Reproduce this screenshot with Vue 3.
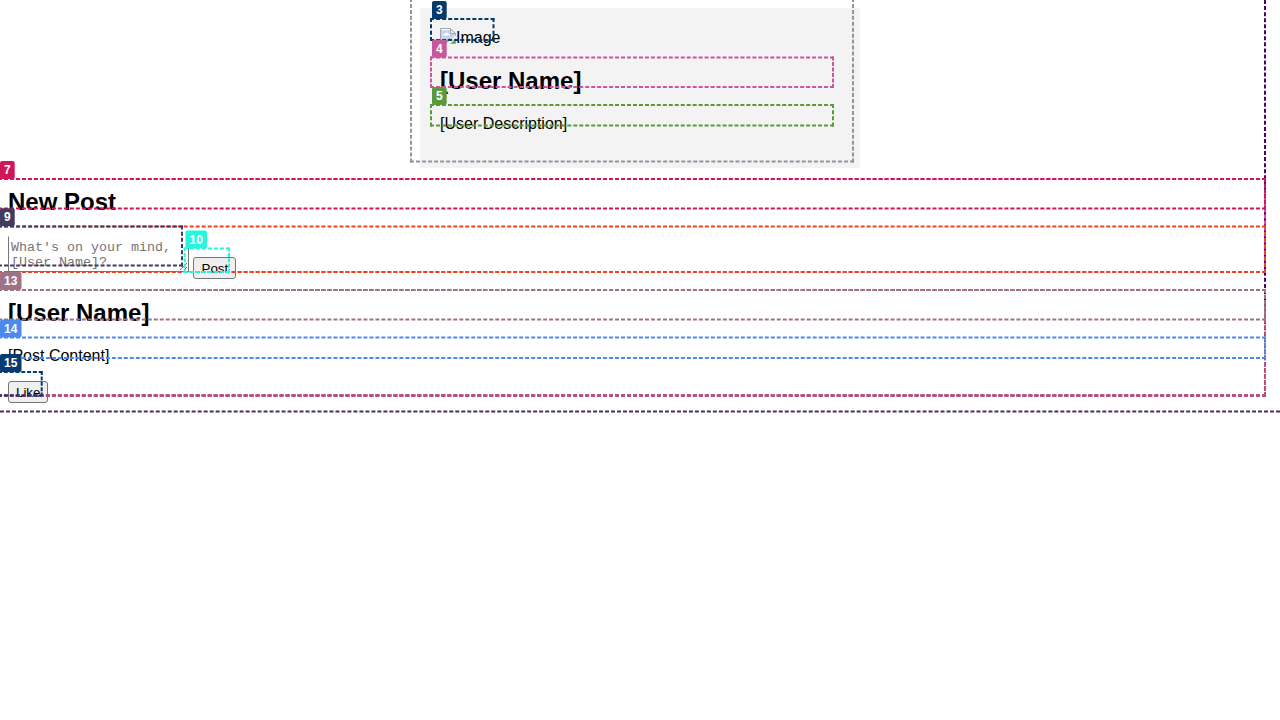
<script setup>
const boxes = [
  { id: 'body', c: '#4a2d68', x: -12, y: -20, r: 1292, b: 412.5 },
  { id: 'main', c: '#4b0078', x: -2, y: -12, r: 1266, b: 396.6 },
  { id: '2', c: '#8b98a3', x: 410, y: -2, r: 854, b: 162.5 },
  { id: '3', c: '#063a6b', x: 430, y: 18, r: 494.5, b: 41, lx: 432, ly: 1 },
  { id: '4', c: '#c9579c', x: 430, y: 56.5, r: 834, b: 88, lx: 432, ly: 39.7 },
  { id: '5', c: '#5a9a3c', x: 430, y: 104, r: 834, b: 126.5, lx: 432, ly: 87 },
  { id: '6', c: '#e646bd', x: -2, y: 178, r: 1266, b: 273 },
  { id: '7', c: '#d1155a', x: -2, y: 178, r: 1266, b: 209.5, lx: 0, ly: 161 },
  { id: '8', c: '#f04322', x: -2, y: 225.5, r: 1266, b: 273 },
  { id: '9', c: '#433b5f', x: -2, y: 225.5, r: 183, b: 266.5, lx: 0, ly: 208.3 },
  { id: '10', c: '#27f5dc', x: 183.7, y: 247.5, r: 230, b: 273, lx: 185.5, ly: 230.5 },
  { id: '11', c: '#a83f91', x: -2, y: 289, r: 1266, b: 396.6 },
  { id: '12', c: '#c94a68', x: -2, y: 289, r: 1266, b: 396.6 },
  { id: '13', c: '#9d7388', x: -2, y: 289, r: 1266, b: 320.5, lx: 0, ly: 272 },
  { id: '14', c: '#4c89ef', x: -2, y: 336.5, r: 1266, b: 359, lx: 0, ly: 319.6 },
  { id: '15', c: '#063a73', x: -2, y: 371, r: 42.7, b: 396.6, lx: 0, ly: 354 }
]

// Spreads 4px dashes so that each side starts and ends on a full dash.
const dash = (len) => {
  const gaps = Math.max(1, Math.round((len - 4) / 6))
  return `4 ${(len - 4 * (gaps + 1)) / gaps}`
}
const sides = (o) => [
  { x1: o.x, y1: o.y + 1, x2: o.r, y2: o.y + 1, d: dash(o.r - o.x) },
  { x1: o.x, y1: o.b - 1, x2: o.r, y2: o.b - 1, d: dash(o.r - o.x) },
  { x1: o.x + 1, y1: o.y, x2: o.x + 1, y2: o.b, d: dash(o.b - o.y) },
  { x1: o.r - 1, y1: o.y, x2: o.r - 1, y2: o.b, d: dash(o.b - o.y) }
]
</script>

<template>
  <div class="page">
    <section class="profile">
      <div class="avatar">
        <svg class="broken" width="16" height="16" viewBox="0 0 16 16">
          <path d="M.5.5h10l5 5v10H.5z" fill="#c3d5f7" stroke="#a5a5a5" />
          <path d="M1.500 1.500h9v4h4" fill="none" stroke="#fff" />
          <path d="M3 7.500q0-2 2-2 1-2 3 0 2 0 2 2z" fill="#fff" />
          <path d="M5.500 14.500q1-4 5-4l-4 4z" fill="#4fae35" />
          <path d="M10.5.5v5h5z" fill="#eee" stroke="#a5a5a5" />
          <path d="M16 7 6 16h4l6-6z" fill="#f3f3f3" />
          <path d="M11 15.5h4.500V11z" fill="#4fae35" stroke="#a5a5a5" stroke-width=".6" />
        </svg><span>Image</span>
      </div>
      <h2>[User Name]</h2>
      <p>[User Description]</p>
    </section>
    <section class="compose">
      <h2>New Post</h2>
      <form @submit.prevent>
        <textarea placeholder="What's on your mind, [User Name]?"></textarea>
        <button type="button">Post</button>
      </form>
    </section>
    <section>
      <h2>[User Name]</h2>
      <p>[Post Content]</p>
      <button type="button" class="like">Like</button>
    </section>
    <svg class="marks" width="1280" height="720">
      <g v-for="o in boxes" :key="o.id">
        <line v-for="(s, i) in sides(o)" :key="i" :x1="s.x1" :y1="s.y1" :x2="s.x2" :y2="s.y2"
          :stroke="o.c" stroke-width="2" :stroke-dasharray="s.d" />
        <template v-if="o.ly !== undefined">
          <rect :x="o.lx" :y="o.ly" :width="o.id.length > 1 ? 21.5 : 14.7" height="18" rx="2" :fill="o.c" />
          <text :x="o.lx + 4" :y="o.ly + 13">{{ o.id }}</text>
        </template>
      </g>
    </svg>
  </div>
</template>

<style>
body { margin: 0; overflow: hidden; background: #fff; }
</style>
<style scoped>
.page {
  position: relative;
  height: 720px;
  padding: 8px;
  box-sizing: border-box;
  overflow: hidden;
  font: 16px "Liberation Sans", Arial, sans-serif;
  color: #000;
}
.profile {
  width: 400px;
  height: 120px;
  margin: 0 auto;
  padding: 20px;
  background: #f3f3f3;
}
.avatar { display: flex; height: 19px; line-height: 20px; }
.broken { flex: none; }
h2 { margin: 20px 0; font-size: 24px; line-height: 27px; font-weight: 700; }
p { margin: 0 0 16px; padding-top: 1px; line-height: 18px; }
.compose h2 { margin-bottom: 21px; }
form { display: flex; align-items: flex-start; height: 43px; }
textarea {
  box-sizing: border-box;
  width: 181px;
  height: 36px;
  margin: 0;
  padding: 3px 2px 1px;
  border: 1px solid #767676;
  border-top-color: transparent;
  overflow: hidden;
  font: 13.333px/15px "Liberation Mono", monospace;
}
textarea::placeholder { color: #757575; }
button {
  box-sizing: border-box;
  width: 43px;
  height: 22px;
  margin: 21px 0 0 4.400px;
  padding: 2px 6px 0;
  border: 1px solid #767676;
  border-radius: 3px;
  background: #efefef;
  color: #000;
  font: 13.333px/18px "Liberation Sans", Arial, sans-serif;
}
.like { display: block; width: 40.400px; margin: 0; padding-top: 1px; }
.marks { position: absolute; left: 0; top: 0; }
.marks text { fill: #fff; font: bold 12px "Liberation Sans", Arial, sans-serif; }
</style>
